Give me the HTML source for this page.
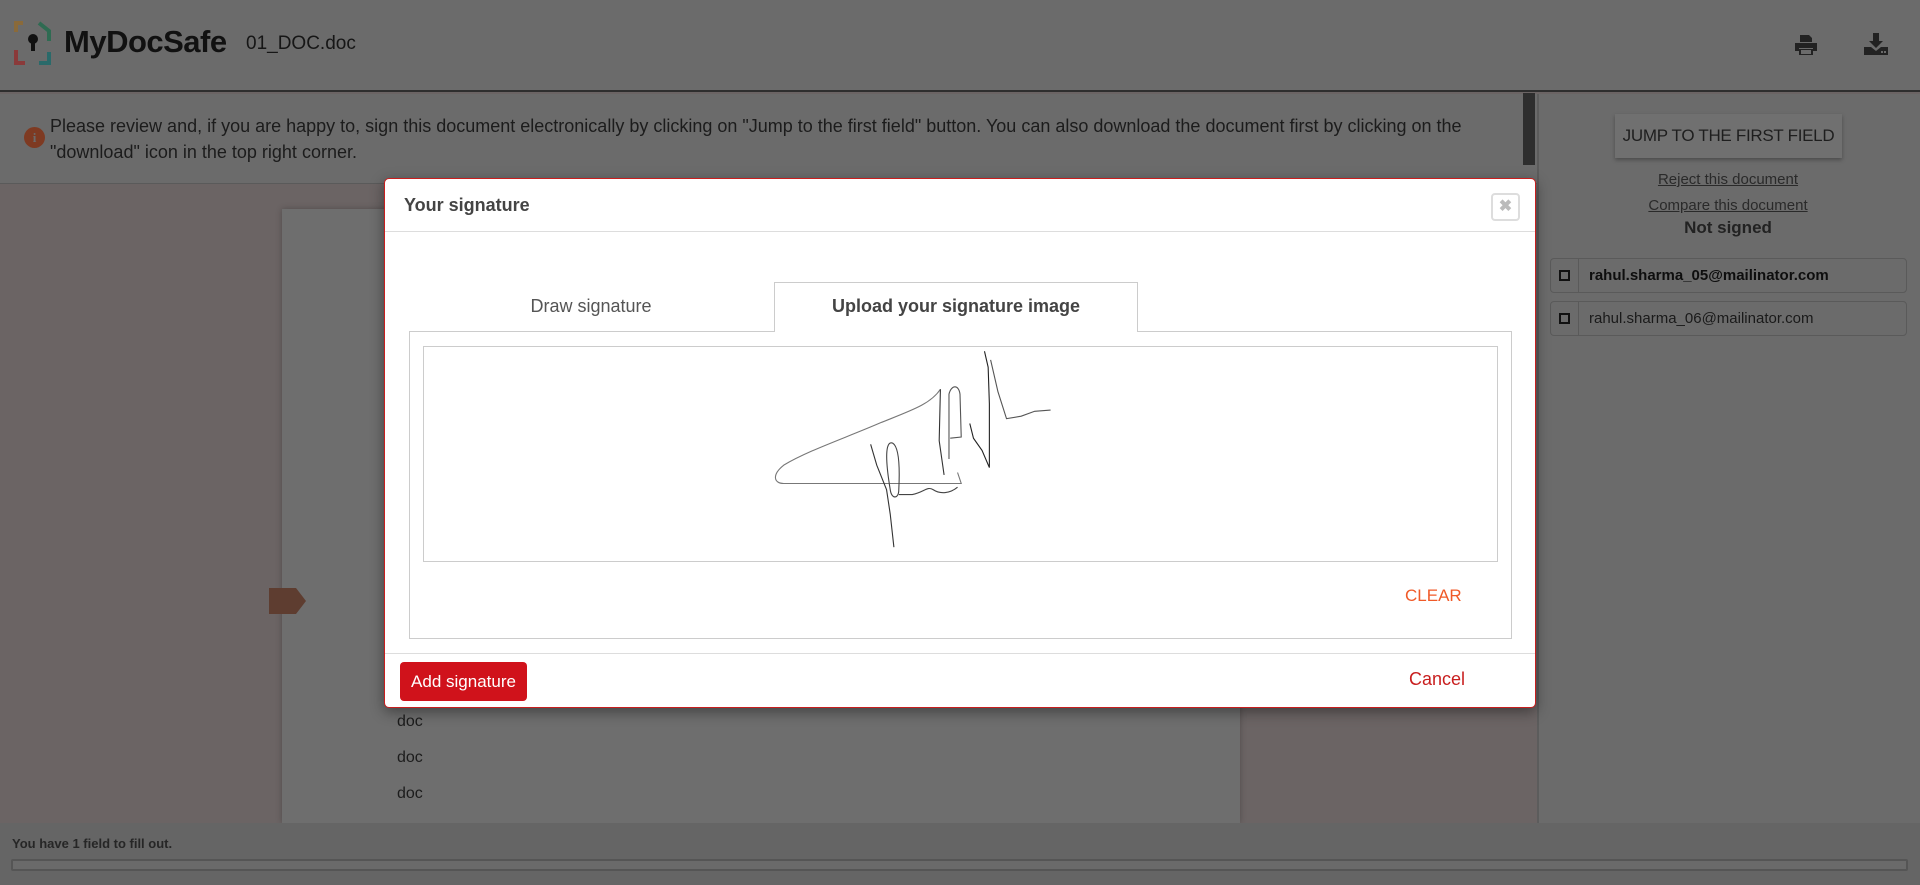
<!DOCTYPE html>
<html><head><meta charset="utf-8"><style>
*{box-sizing:border-box;margin:0;padding:0}
body{width:1920px;height:885px;overflow:hidden;background:#6b6464;font-family:"Liberation Sans",sans-serif;position:relative}
.a{position:absolute}
</style></head><body>
<div class="a" style="left:0;top:0;width:1920px;height:92px;background:#6b6b6b;border-bottom:2px solid #2e2e2e"></div>
<svg class="a" style="left:13px;top:20px" width="40" height="46" viewBox="0 0 40 46">
<path d="M10 3H3v9" stroke="#8a6a3a" stroke-width="4" fill="none"/>
<path d="M26 3l10 8v10" stroke="#2f6b52" stroke-width="4" fill="none"/>
<path d="M3 30v13h9" stroke="#8a3a3a" stroke-width="4" fill="none"/>
<path d="M26 43h10V32" stroke="#2a6a6a" stroke-width="4" fill="none"/>
<circle cx="20" cy="19" r="5" fill="#111"/><rect x="18" y="20" width="4" height="11" fill="#111"/>
</svg>
<div class="a" style="left:64px;top:24px;font-size:31px;font-weight:bold;color:#111;letter-spacing:-0.5px">MyDocSafe</div>
<div class="a" style="left:246px;top:33px;font-size:19px;color:#161616">01_DOC.doc</div>
<svg class="a" style="left:1794px;top:34px" width="24" height="22" viewBox="0 0 24 22"><path d="M6 1h9l3 3v4H6z M1 9h22v8h-4v-3H5v3H1z M5 15h14v6H5z" fill="#222"/><rect x="7" y="16" width="10" height="4" fill="#6b6b6b"/></svg>
<svg class="a" style="left:1864px;top:33px" width="24" height="22" viewBox="0 0 24 22"><path d="M9 0h6v8h4l-7 7-7-7h4z M0 14h7l5 4 5-4h7v8H0z" fill="#222"/><rect x="17" y="18" width="2" height="2" fill="#6b6b6b"/><rect x="20" y="18" width="2" height="2" fill="#6b6b6b"/></svg>
<div class="a" style="left:0;top:94px;width:1537px;height:90px;background:#6b6b6b;border-bottom:1px solid #5a5a5a"></div>
<div class="a" style="left:24px;top:127px;width:21px;height:21px;border-radius:50%;background:#7e3a22;color:#6b6b6b;font:bold 13px 'Liberation Serif',serif;text-align:center;line-height:21px">i</div>
<div class="a" style="left:50px;top:113px;width:1470px;font-size:18px;line-height:26px;color:#1c1c1c">Please review and, if you are happy to, sign this document electronically by clicking on "Jump to the first field" button. You can also download the document first by clicking on the "download" icon in the top right corner.</div>
<div class="a" style="left:1523px;top:93px;width:12px;height:72px;background:#2e2e2e"></div>
<div class="a" style="left:282px;top:209px;width:958px;height:614px;background:#6e6e6e;box-shadow:0 0 6px rgba(0,0,0,.25)"></div>
<svg class="a" style="left:269px;top:588px" width="38" height="26"><path d="M0 0h27l10 13-10 13H0z" fill="#5e3d30"/></svg>
<div class="a" style="left:397px;top:704px;font-size:16px;color:#1c1c1c;line-height:36px">doc<br>doc<br>doc</div>
<div class="a" style="left:1537px;top:94px;width:383px;height:729px;background:#6b6b6b;border-left:2px solid #5c5c5c"></div>
<div class="a" style="left:1615px;top:114px;width:227px;height:44px;background:#707070;box-shadow:0 2px 4px rgba(0,0,0,.3);font-size:17px;color:#1e1e1e;text-align:center;line-height:44px;white-space:nowrap;letter-spacing:-0.3px">JUMP TO THE FIRST FIELD</div>
<div class="a" style="left:1560px;top:167px;width:336px;text-align:center;font-size:15px;color:#2a2a2a;line-height:26px"><u>Reject this document</u><br><u>Compare this document</u></div>
<div class="a" style="left:1560px;top:218px;width:336px;text-align:center;font-size:17px;font-weight:bold;color:#222">Not signed</div>
<div class="a" style="left:1550px;top:258px;width:357px;height:35px;border:1px solid #5a5a5a;border-radius:4px"><div style="position:absolute;left:0;top:0;width:28px;height:33px;border-right:1px solid #5a5a5a"></div><div style="position:absolute;left:8px;top:11px;width:11px;height:11px;border:2px solid #111"></div><div style="position:absolute;left:38px;top:8px;font-size:15px;font-weight:bold;color:#0e0e0e">rahul.sharma_05@mailinator.com</div></div>
<div class="a" style="left:1550px;top:301px;width:357px;height:35px;border:1px solid #5a5a5a;border-radius:4px"><div style="position:absolute;left:0;top:0;width:28px;height:33px;border-right:1px solid #5a5a5a"></div><div style="position:absolute;left:8px;top:11px;width:11px;height:11px;border:2px solid #111"></div><div style="position:absolute;left:38px;top:8px;font-size:15px;color:#1a1a1a">rahul.sharma_06@mailinator.com</div></div>
<div class="a" style="left:0;top:823px;width:1920px;height:62px;background:#656565"></div>
<div class="a" style="left:12px;top:836px;font-size:13px;font-weight:bold;color:#262626">You have 1 field to fill out.</div>
<div class="a" style="left:11px;top:859px;width:1897px;height:12px;border:2px solid #555;border-radius:2px;background:#6a6a6a"></div>
<div class="a" style="left:384px;top:178px;width:1152px;height:530px;background:#fff;border:1px solid #c81e1e;border-radius:5px;box-shadow:0 4px 14px rgba(0,0,0,.4)">
 <div class="a" style="left:0;top:0;width:1150px;height:53px;border-bottom:1px solid #ddd"></div>
 <div class="a" style="left:19px;top:16px;font-size:18px;font-weight:bold;color:#444">Your signature</div>
 <div class="a" style="left:1106px;top:14px;width:29px;height:28px;border:2px solid #ddd;border-radius:4px;color:#bbb;font:bold 16px sans-serif;text-align:center;line-height:24px">✖</div>
 <div class="a" style="left:24px;top:152px;width:1103px;height:308px;border:1px solid #ccc"></div>
 <div class="a" style="left:389px;top:103px;width:364px;height:50px;border:1px solid #ccc;border-bottom:none;background:#fff"></div>
 <div class="a" style="left:24px;top:117px;width:364px;text-align:center;font-size:18px;color:#555">Draw signature</div>
 <div class="a" style="left:389px;top:117px;width:364px;text-align:center;font-size:18px;font-weight:bold;color:#444">Upload your signature image</div>
 <div class="a" style="left:38px;top:167px;width:1075px;height:216px;border:1px solid #ccc"></div>
 <div class="a" style="left:1020px;top:407px;width:55px;font-size:17px;color:#f05a28">CLEAR</div>
 <div class="a" style="left:0;top:474px;width:1150px;height:1px;background:#ddd"></div>
 <div class="a" style="left:15px;top:483px;width:127px;height:39px;background:#d0121b;border-radius:4px;color:#fff;font-size:17px;text-align:center;line-height:39px">Add signature</div>
 <div class="a" style="left:1024px;top:490px;font-size:18px;color:#c81e1e">Cancel</div>
</div>
<svg class="a" style="left:0;top:0" width="1920" height="885" viewBox="0 0 1568 723" fill="none" stroke-width="0.9">
<path d="M768 318 C760 330 745 335 720 345 C690 358 660 368 640 380 C630 388 632 395 640 395 L785 395 L782 386" stroke="#777"/>
<path d="M768 318 L767 360 L771 388" stroke="#333"/>
<path d="M775 375 L775 322 C777 314 783 314 784 322 L785 357 L776 358" stroke="#555"/>
<path d="M792 346 L795 358 L802 368 L808 382 L808 330 L807 300 L804 287" stroke="#222"/>
<path d="M809 294 L815 320 L822 342 L834 340 L845 336 L858 335" stroke="#555"/>
<path d="M711 363 L716 380 L724 400 L727 420 L730 447" stroke="#333"/>
<path d="M727 400 C722 370 724 360 729 362 C734 365 735 380 734 400 C734 408 728 408 727 400" stroke="#444"/>
<path d="M734 404 L745 404 C755 402 757 397 762 400 C768 404 776 403 782 398" stroke="#444"/>
</svg>
</body></html>
